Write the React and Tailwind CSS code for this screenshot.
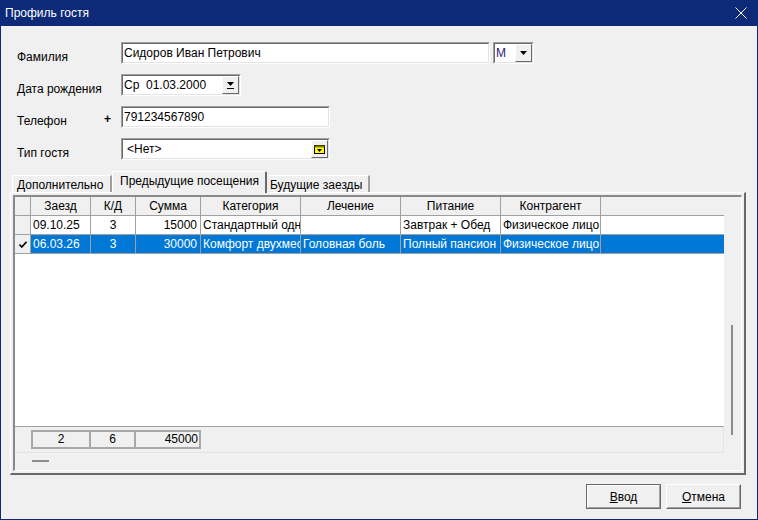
import React from 'react';

const cols = [
  { title: 'Заезд', w: 'w-[60px]', align: 'text-left pl-[2px]' },
  { title: 'К/Д', w: 'w-[45px]', align: 'text-center' },
  { title: 'Сумма', w: 'w-[65px]', align: 'text-right pr-[3px]' },
  { title: 'Категория', w: 'w-[100px]', align: 'text-left pl-[2px]' },
  { title: 'Лечение', w: 'w-[100px]', align: 'text-left pl-[2px]' },
  { title: 'Питание', w: 'w-[100px]', align: 'text-left pl-[2px]' },
  { title: 'Контрагент', w: 'w-[100px]', align: 'text-left pl-[2px]' },
];

const visits = [
  ['09.10.25', '3', '15000', 'Стандартный одноместный', '', 'Завтрак + Обед', 'Физическое лицо'],
  ['06.03.26', '3', '30000', 'Комфорт двухместный', 'Головная боль', 'Полный пансион', 'Физическое лицо'],
];

const Sunken = ({ w, children }) => (
  <div className={`flex h-[22px] border border-t-[#a0a0a0] border-l-[#a0a0a0] border-b-white border-r-white ${w}`}>
    <div className="flex flex-1 items-center overflow-hidden border border-t-[#696969] border-l-[#696969] border-b-[#e3e3e3] border-r-[#e3e3e3] bg-white">
      {children}
    </div>
  </div>
);

const DropBtn = ({ children }) => (
  <div className="flex h-full w-[17px] shrink-0 items-center justify-center border border-t-white border-l-white border-b-[#696969] border-r-[#696969] bg-[#f0f0f0]">
    {children}
  </div>
);

const Arrow = () => (
  <svg width="7" height="4" viewBox="0 0 7 4"><path d="M0 0h7L3.5 4z" fill="#000" /></svg>
);

const ArrowBar = () => (
  <svg width="7" height="7" viewBox="0 0 7 7">
    <path d="M0 0h7L3.5 4z" fill="#000" />
    <rect x="0" y="6" width="7" height="1" fill="#000" />
  </svg>
);

const Folder = () => (
  <svg width="11" height="9" viewBox="0 0 11 9">
    <rect x="0.5" y="0.5" width="10" height="8" fill="#ffff00" stroke="#000" />
    <rect x="0.5" y="0.5" width="10" height="2" fill="#808000" />
    <path d="M3 4h5L5.5 7z" fill="#000" />
  </svg>
);

function Label({ children }) {
  return <div className="w-[104px] shrink-0 self-start pt-[8px] leading-[14px]">{children}</div>;
}

export default function App() {
  return (
    <div className="flex h-[520px] w-[758px] flex-col border-x border-b border-[#0c2a77] font-['Liberation_Sans',Arial,sans-serif] text-[12px] text-black">
      <div className="flex h-[26px] shrink-0 items-center justify-between bg-[#0c2a77] pl-[4px] pr-[10px] text-white">
        <span>Профиль гостя</span>
        <svg width="12" height="12" viewBox="0 0 12 12">
          <path d="M0.5 0.5l11 11M11.5 0.5l-11 11" stroke="#fff" strokeWidth="1" />
        </svg>
      </div>

      <div className="flex flex-1 flex-col bg-[#f0f0f0] pt-[16px]">
        <div className="flex flex-col gap-[10px] pl-[16px]">
          <div className="flex h-[22px] items-center">
            <Label>Фамилия</Label>
            <Sunken w="w-[369px]">
              <span className="pl-[1px]">Сидоров Иван Петрович</span>
            </Sunken>
            <div className="ml-[3px]">
              <Sunken w="w-[41px]">
                <span className="flex-1 pl-[1px] text-[#2a1a80]">M</span>
                <DropBtn><Arrow /></DropBtn>
              </Sunken>
            </div>
          </div>

          <div className="flex h-[22px] items-center">
            <Label>Дата рождения</Label>
            <Sunken w="w-[120px]">
              <span className="flex-1 whitespace-pre pl-[1px]">Ср  01.03.2000</span>
              <DropBtn><ArrowBar /></DropBtn>
            </Sunken>
          </div>

          <div className="flex h-[22px] items-center">
            <div className="flex w-[104px] shrink-0 items-center justify-between self-start pr-[10px]">
              <span className="pt-[8px] leading-[14px]">Телефон</span>
              <span className="pt-[3px] font-bold">+</span>
            </div>
            <Sunken w="w-[209px]">
              <span className="pl-[1px]">791234567890</span>
            </Sunken>
          </div>

          <div className="flex h-[22px] items-center">
            <Label>Тип гостя</Label>
            <Sunken w="w-[209px]">
              <span className="flex-1 pl-[4px]">&lt;Нет&gt;</span>
              <DropBtn><Folder /></DropBtn>
            </Sunken>
          </div>
        </div>

        {/* tabs */}
        <div className="ml-[9px] mt-[11px] flex h-[21px] items-end">
          <div className="ml-[2px] flex h-[17px] w-[100px] items-center border-l border-t border-r-2 border-l-white border-t-white border-r-[#a0a0a0] pl-[4px] pt-[2px]">
            Дополнительно
          </div>
          <div className="relative z-10 -mb-[1px] flex h-[22px] w-[155px] items-center rounded-t-[2px] border-l border-t border-r-2 border-l-white border-t-white border-r-[#696969] bg-[#f0f0f0] pl-[7px] pb-[3px]">
            Предыдущие посещения
          </div>
          <div className="flex h-[17px] w-[103px] items-center border-t border-r-2 border-t-white border-r-[#a0a0a0] pl-[3px] pt-[2px]">
            Будущие заезды
          </div>
        </div>

        {/* tab page */}
        <div className="ml-[9px] flex h-[283px] w-[736px] flex-col border-l border-t border-r-2 border-b-2 border-l-white border-t-white border-r-[#696969] border-b-[#696969] p-[2px] pb-[2px]">
          <div className="flex h-[276px] flex-col border-l-2 border-t-2 border-r border-b border-l-[#8a8a8a] border-t-[#8a8a8a] border-r-white border-b-white">
            <div className="flex h-[256px]">
              <div className="flex w-[709px] flex-col">
                {/* header */}
                <div className="flex h-[19px] shrink-0 border-b border-[#a0a0a0] bg-[#f0f0f0]">
                  <div className="w-[16px] border-r border-[#a0a0a0]" />
                  {cols.map((c) => (
                    <div key={c.title} className={`${c.w} border-r border-[#a0a0a0] text-center leading-[18px]`}>
                      {c.title}
                    </div>
                  ))}
                </div>
                {/* data */}
                <div className="h-[210px] bg-white">
                  {visits.map((r, i) => {
                    const sel = i === 1;
                    return (
                      <div key={i} className={`flex h-[19px] border-b border-[#a0a0a0] ${sel ? 'bg-[#0078d7] text-white' : 'bg-white'}`}>
                        <div className="flex w-[16px] items-center justify-center border-r border-[#a0a0a0] bg-[#f0f0f0]">
                          {sel && (
                            <svg width="8" height="7" viewBox="0 0 8 7">
                              <path d="M0.5 3.5l2.3 2.5L7.5 0.8" stroke="#000" strokeWidth="1.6" fill="none" />
                            </svg>
                          )}
                        </div>
                        {cols.map((c, j) => (
                          <div key={j} className={`${c.w} ${c.align} overflow-hidden whitespace-nowrap border-r border-[#a0a0a0] leading-[18px]`}>
                            {r[j]}
                          </div>
                        ))}
                      </div>
                    );
                  })}
                </div>
                {/* totals */}
                <div className="flex h-[27px] border-t border-b border-r border-t-[#a0a0a0] border-b-[#e3e3e3] border-r-[#e3e3e3] bg-[#f0f0f0] pl-[16px] pt-[3px]">
                  <div className="flex h-[19px]">
                    <div className="w-[60px] border-2 border-[#a8a8a8] text-center leading-[15px]">2</div>
                    <div className="w-[45px] border-y-2 border-r-2 border-[#a8a8a8] text-center leading-[15px]">6</div>
                    <div className="w-[65px] border-y-2 border-r-2 border-[#a8a8a8] pr-[1px] text-right leading-[15px]">45000</div>
                  </div>
                </div>
              </div>
              <div className="flex flex-1 flex-col bg-[#f0f0f0] pl-[7px] pt-[128px]">
                <div className="h-[110px] w-[2px] bg-[#8c8c8c]" />
              </div>
            </div>
            <div className="flex-1 bg-[#f0f0f0] pl-[17px] pt-[7px]">
              <div className="h-[2px] w-[17px] bg-[#8c8c8c]" />
            </div>
          </div>
        </div>

        {/* buttons */}
        <div className="mt-[9px] flex justify-end gap-[5px] pr-[16px]">
          <div className="flex h-[25px] w-[75px] border border-[#696969]">
            <div className="flex flex-1 items-center justify-center border border-t-white border-l-white border-b-[#a0a0a0] border-r-[#a0a0a0]">
              <span><u>В</u>вод</span>
            </div>
          </div>
          <div className="flex h-[25px] w-[75px] border border-t-white border-l-white border-b-[#696969] border-r-[#696969]">
            <div className="flex flex-1 items-center justify-center border border-t-[#f0f0f0] border-l-[#f0f0f0] border-b-[#a0a0a0] border-r-[#a0a0a0]">
              <span><u>О</u>тмена</span>
            </div>
          </div>
        </div>
      </div>
    </div>
  );
}
